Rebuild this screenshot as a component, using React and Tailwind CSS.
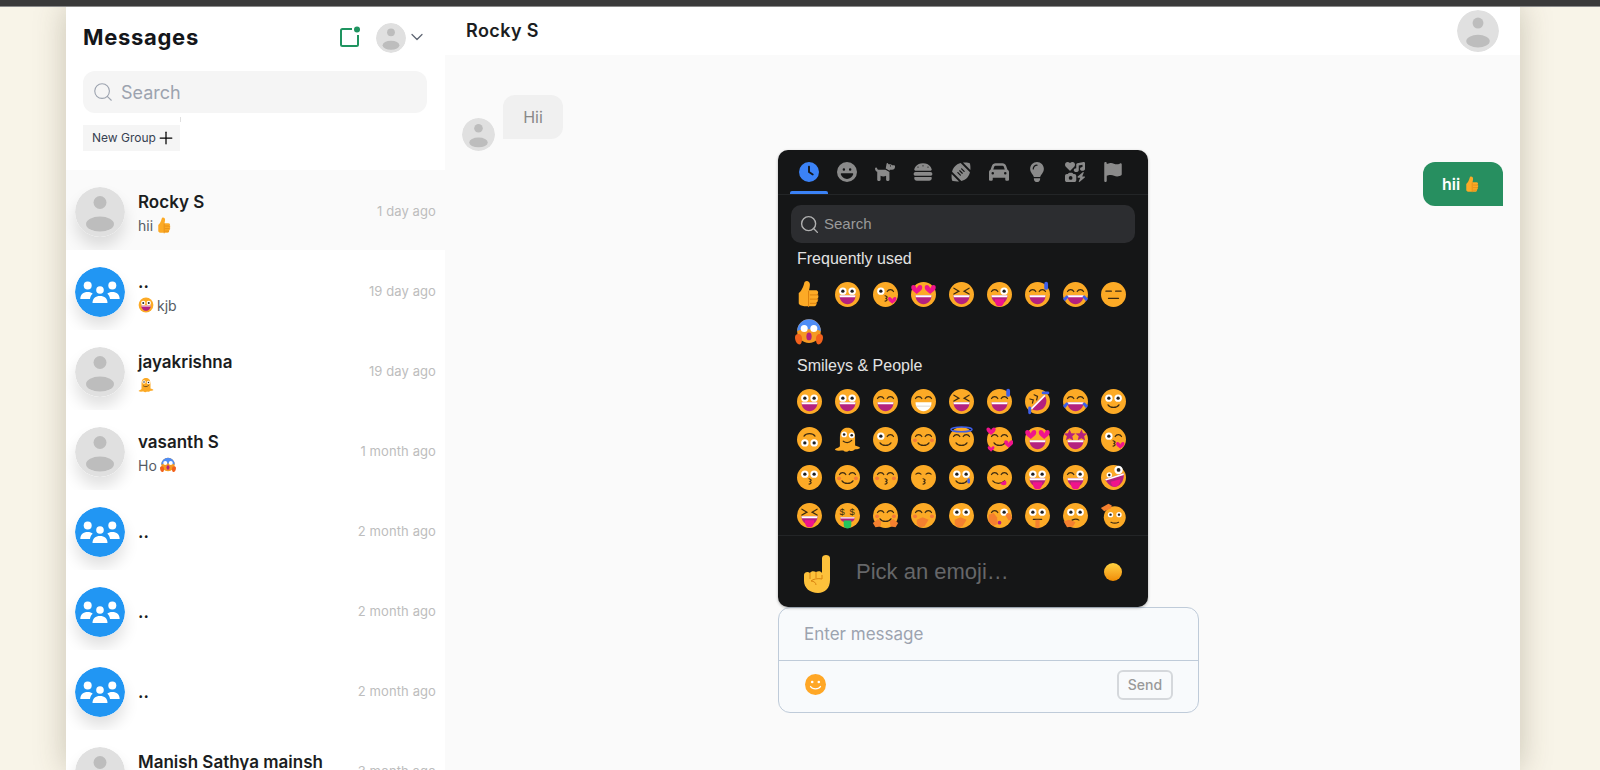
import { ChevronDown, Plus, Search } from "lucide-react";
import {
  FaCar,
  FaClock,
  FaDog,
  FaFaceLaugh,
  FaBurger,
  FaFlag,
  FaFootball,
  FaIcons,
  FaLightbulb,
} from "react-icons/fa6";

const INK = "#3b2a12";
const MOUTH = "#b4217f";
const PINK = "#f0148c";
const BLUE = "#3e5ee8";
const HAND = "#f4802f";

const line = { fill: "none", stroke: INK, strokeWidth: 1.4, strokeLinecap: "round" };

const Heart = ({ x, y, s = 1 }) => (
  <path
    transform={`translate(${x} ${y}) scale(${s})`}
    d="M0 3C-1-1-5-1-5 2c0 2.500 3 4 5 6 2-2 5-3.500 5-6C5-1 1-1 0 3z"
    fill={PINK}
  />
);

const Eye = ({ x, y = 12, r = 4.4 }) => (
  <g>
    <circle cx={x} cy={y} r={r} fill="#fff" />
    <circle cx={x} cy={y} r={r * 0.45} fill="#222" />
  </g>
);

// the pieces every face below is put together from
const parts = {
  big: (<><Eye x={10.5} /><Eye x={21.5} /></>),
  arcs: (<><path {...line} d="M6.500 12.500a4.200 4.200 0 0 1 7.500 0" /><path {...line} d="M18 12.500a4.200 4.200 0 0 1 7.500 0" /></>),
  x: (<><path {...line} d="M7 8.500l6 3.500-6 3.500" /><path {...line} d="M25 8.500l-6 3.500 6 3.500" /></>),
  wink: (<><Eye x={10.5} /><path {...line} d="M18 12.500a4.200 4.200 0 0 1 7.500 0" /></>),
  winkR: (<><path {...line} d="M6.500 12.500a4.200 4.200 0 0 1 7.500 0" /><Eye x={21.5} /></>),
  flat: (<><path {...line} d="M7 12h6.500" /><path {...line} d="M18.500 12h6.500" /></>),
  closed: (<><path {...line} d="M7 12c2-1.500 4-1.500 6 0" /><path {...line} d="M19 12c2-1.500 4-1.500 6 0" /></>),
  hearts: (<><Heart x={8} y={5} s={1.3} /><Heart x={24} y={5} s={1.3} /></>),
  stars: (<><path d="M9 4l2 4.500 5 .5-3.800 3.200 1.200 5L9 14.500 4.600 17l1.200-5L2 9l5-.5z" fill={MOUTH} /><path d="M23 4l2 4.500 5 .5-3.800 3.200 1.200 5L23 14.500 18.600 17l1.200-5L16 9l5-.5z" fill={MOUTH} /></>),
  open: (<><path d="M6.500 17h19c0 6.500-4.500 10.500-9.500 10.500S6.500 23.500 6.500 17z" fill={MOUTH} /><path d="M6.500 17h19l-.4 2.200H6.900z" fill="#fff" /></>),
  teeth: (<><path d="M6.500 17h19c0 6.500-4.500 10.500-9.500 10.500S6.500 23.500 6.500 17z" fill="#fff" /><path {...line} stroke="#c9c4bd" strokeWidth={0.8} d="M7 21.500h18" /></>),
  smile: <path {...line} d="M9.500 20c2.500 4 10.500 4 13 0" />,
  flatMouth: <path {...line} d="M10 20.500h12" />,
  kiss: <path {...line} d="M15.500 17.500c3.200.8 3.200 2.600.5 3.200 2.700.6 2.700 2.400-.5 3.200" />,
  tongue: (<><path d="M6.500 17h19c0 5-3 8-5 9.500-2 3.500-6 3.500-8 0-3-1.500-6-4.500-6-9.500z" fill={MOUTH} /><path d="M6.500 17h19l-.4 2.200H6.900z" fill="#fff" /><path d="M10.500 21.500h11c0 6-2 8.500-5.500 8.500s-5.500-2.500-5.500-8.500z" fill={PINK} /></>),
  yum: (<><path {...line} d="M8 20c3 4 10 4 14 0" /><path d="M17 22.500l6-3c2 2 1.500 5-1 5.500-2 .5-4-.5-5-2.500z" fill={PINK} /></>),
  blush: (<><circle cx="6" cy="17" r="2.300" fill="#f47b3a" /><circle cx="26" cy="17" r="2.300" fill="#f47b3a" /></>),
  sweat: <rect x="24" y="1" width="4.500" height="9.500" rx="2.200" fill={BLUE} />,
  tears: (<><path d="M1 21l4.500-4 2.500 2-4.500 5z" fill={BLUE} /><path d="M31 21l-4.500-4-2.500 2 4.500 5z" fill={BLUE} /></>),
  tear: <rect x="23" y="17" width="3" height="6" rx="1.500" fill={BLUE} />,
  halo: <ellipse cx="16" cy="4" rx="12.500" ry="2.800" fill="none" stroke={BLUE} strokeWidth="1.800" />,
  ringHearts: (<><Heart x={6} y={2} s={1.1} /><Heart x={27} y={17} s={1.1} /><Heart x={6} y={24} s={0.8} /></>),
  kissHeart: <Heart x={24} y={19} s={1} />,
  money: (<><text x="6.500" y="15.500" fontSize="11" fill={INK}>$</text><text x="18.500" y="15.500" fontSize="11" fill={INK}>$</text><path d="M7.500 18h17c0 4-2 6-8.500 6s-8.500-2-8.500-6z" fill={MOUTH} /><path d="M7.500 18h17l-.3 1.600H7.800z" fill="#fff" /><path d="M11.500 22h9v5c0 6-9 6-9 0z" fill="#22c55e" /></>),
  hug: (<><path d="M1 25l6-5 4 3-1 6-6 1z" fill={HAND} /><path d="M31 25l-6-5-4 3 1 6 6 1z" fill={HAND} /></>),
  palm: <path d="M8 21l7-3 7 3-5 8-6 1-3-4z" fill={HAND} />,
  yawn: (<><circle cx="16" cy="24.500" r="2.200" fill={MOUTH} /><path d="M3 15l6-2 4 5 1 8-5 2-6-5z" fill={HAND} /><path d="M29 14l-4-1-2 3 4 6 4-2z" fill={HAND} /></>),
  shush: (<><path {...line} d="M11 20.500h10" /><path d="M13.500 21h5v8c0 3-5 3-5 0z" fill={HAND} /></>),
  think: (<><path {...line} d="M12 21.500c3-1.500 6-1.500 8 0" /><path d="M2 23l6-2 3 1 5 2-3 5-7 1z" fill={HAND} /></>),
  salute: <path d="M1 6l9-4 4 2-1 3-8 3z" fill={HAND} />,
};

const Emoji = ({ kind = [], size = 27 }) => (
  <svg width={size} height={size} viewBox="0 0 32 32" className="shrink-0">
    <circle cx="16" cy="16" r="14.800" fill="#fcaa26" />
    {kind.map((k) => (
      <g key={k}>{parts[k]}</g>
    ))}
  </svg>
);

const Thumb = ({ size = 28 }) => (
  <svg width={size} height={size} viewBox="4 1 26 30" className="shrink-0">
    <path
      d="M6 15c3-2 5-7 6-11 .5-3 6-3 6 2 0 2-.5 4-1 6h7c3 0 3.500 3 2 4.500 1.500 1 1.500 3.500 0 4.500 1 1.500.5 3.500-1 4 .5 2-.5 4-2.500 4H12c-3 0-6-1.500-6-3z"
      fill="#fcaa26"
    />
    <path d="M18 17h9M18 21.500h9M18 26h7M16.500 12.500V30" fill="none" stroke="#d97f0e" strokeWidth="1" />
  </svg>
);

const Melting = ({ size = 27 }) => (
  <svg width={size} height={size} viewBox="0 0 32 32" className="shrink-0">
    <path
      d="M7 14C7 5 11 2 16 2s9 3 9 12v9c2 1 5 1 6 3-2 2-5 1-7 2-2 2-4 2-6 1-2 2-5 2-7 0-3 0-7 1-10-1 1-2 5-2 6-4z"
      fill="#fcaa26"
    />
    <Eye x={12} y={10} r={3.400} />
    <Eye x={21} y={11} r={3.400} />
    <path {...line} d="M11 18c3 2 7 2 10-1" />
  </svg>
);

const Scream = ({ size = 28 }) => (
  <svg width={size} height={size} viewBox="0 0 32 32" className="shrink-0">
    <circle cx="16" cy="15" r="13.500" fill="#f59a23" />
    <path d="M2.500 15a13.500 13.500 0 0 1 27 0c-4-3-23-3-27 0z" fill="#4f8df5" />
    <circle cx="10.500" cy="12" r="4" fill="#fff" />
    <circle cx="21.500" cy="12" r="4" fill="#fff" />
    <ellipse cx="16" cy="21" rx="3" ry="4.500" fill={MOUTH} />
    <path d="M0 22c0-4 5-5 7-2 2 3 1 9-1 10-3 1-6-3-6-8zM32 22c0-4-5-5-7-2-2 3-1 9 1 10 3 1 6-3 6-8z" fill="#f2611c" />
  </svg>
);

const UpsideDown = ({ size = 27 }) => (
  <svg width={size} height={size} viewBox="0 0 32 32" className="shrink-0">
    <circle cx="16" cy="16" r="14.800" fill="#fcaa26" />
    <Eye x={10.5} y={20} />
    <Eye x={21.5} y={20} />
    <path {...line} d="M9.500 12c2.500-4 10.500-4 13 0" />
  </svg>
);

const Rofl = ({ size = 27 }) => (
  <svg width={size} height={size} viewBox="0 0 32 32" className="shrink-0">
    <circle cx="16" cy="16" r="14.800" fill="#fcaa26" />
    <path d="M8 24L24 8c4 5 3 12-1 16-4 3-10 4-15 0z" fill={MOUTH} />
    <path d="M8 24L24 8l1.500 1.500L9.500 25.500z" fill="#fff" />
    <path {...line} d="M12 8l4 2-1 4M7 13l4 1-1 4" />
    <rect x="21" y="4" width="9" height="3.500" rx="1.700" fill={BLUE} />
    <rect x="5" y="22" width="3.500" height="9" rx="1.700" fill={BLUE} />
  </svg>
);

const Zany = ({ size = 27 }) => (
  <svg width={size} height={size} viewBox="0 0 32 32" className="shrink-0">
    <circle cx="16" cy="16" r="14.800" fill="#fcaa26" />
    <Eye x={11} y={13} r={3.200} />
    <Eye x={22} y={7} r={5} />
    <path d="M6 18l22-7c1 8-3 14-9 16-5 1-10-3-13-9z" fill={MOUTH} />
    <path d="M6 18l22-7 .2 2-21 6.500z" fill="#fff" />
    <path d="M13 21l11-3c0 5-2 8-6 9-3 0-5-3-5-6z" fill={PINK} />
  </svg>
);

const Salute = ({ size = 27 }) => (
  <svg width={size} height={size} viewBox="0 0 32 32" className="shrink-0">
    <circle cx="17.500" cy="18" r="13" fill="#fcaa26" />
    <path d="M1 7l9-5 4 2-1 3.500-8 3.500z" fill={HAND} />
    <Eye x={12.5} y={15} r={3.200} />
    <Eye x={22.5} y={15} r={3.200} />
    <path {...line} d="M13 24c3 1.500 6 1.500 9 0" />
  </svg>
);

const F = (...kind) => ({ kind });
const C = (Comp) => ({ Comp });

const frequent = [
  C(Thumb), F("big", "open"), F("wink", "kiss", "kissHeart"), F("hearts", "open"), F("x", "open"),
  F("winkR", "tongue"), F("arcs", "open", "sweat"), F("arcs", "open", "tears"), F("flat", "flatMouth"),
  C(Scream),
];

const smileys = [
  F("big", "open"), F("big", "open"), F("arcs", "open"), F("arcs", "teeth"), F("x", "open"),
  F("arcs", "open", "sweat"), C(Rofl), F("arcs", "open", "tears"), F("big", "smile"),
  C(UpsideDown), C(Melting), F("wink", "smile"), F("arcs", "smile", "blush"), F("arcs", "smile", "halo"),
  F("arcs", "smile", "ringHearts"), F("hearts", "open"), F("stars", "open"), F("wink", "kiss", "kissHeart"),
  F("big", "kiss"), F("arcs", "smile", "blush"), F("arcs", "kiss", "blush"), F("closed", "kiss"), F("big", "smile", "tear"),
  F("arcs", "yum"), F("big", "tongue"), F("winkR", "tongue"), C(Zany),
  F("x", "tongue"), F("money"), F("arcs", "smile", "blush", "hug"), F("arcs", "blush", "palm"), F("big", "palm"),
  F("winkR", "yawn"), F("big", "shush"), F("big", "think"), C(Salute),
];

const EmojiGrid = ({ items }) => (
  <div className="grid grid-cols-[repeat(9,38px)] auto-rows-[38px] place-items-center">
    {items.map((e, i) =>
      e.Comp ? <e.Comp key={i} /> : <Emoji key={i} kind={e.kind} />
    )}
  </div>
);

const Avatar = ({ size = 50, shadow }) => (
  <svg
    width={size}
    height={size}
    viewBox="0 0 50 50"
    className={`shrink-0 rounded-full ${shadow ? "shadow-[0_10px_15px_rgba(0,0,0,0.12)]" : ""}`}
  >
    <circle cx="25" cy="25" r="25" fill="#e0e0e0" />
    <circle cx="25" cy="15.500" r="6.500" fill="#bdbdbd" />
    <ellipse cx="25" cy="37" rx="14" ry="7.500" fill="#bdbdbd" />
  </svg>
);

const GroupAvatar = () => (
  <svg
    width="50"
    height="50"
    viewBox="0 0 50 50"
    className="shrink-0 rounded-full shadow-[0_10px_15px_rgba(0,0,0,0.12)]"
  >
    <circle cx="25" cy="25" r="25" fill="#2196f3" />
    <g fill="#fff">
      <circle cx="12.700" cy="18.500" r="4" />
      <circle cx="37.300" cy="18.500" r="4" />
      <circle cx="25" cy="23" r="3.800" />
      <path d="M5.300 32c0-4.500 3-7 7.400-7 2.200 0 3.800.6 5 1.800-1.600 1.200-2.500 3-2.700 5.200z" />
      <path d="M44.700 32c0-4.500-3-7-7.400-7-2.200 0-3.800.6-5 1.800 1.600 1.200 2.500 3 2.700 5.200z" />
      <path d="M17.500 36c0-4.500 3-7 7.500-7s7.500 2.500 7.500 7z" />
    </g>
  </svg>
);

const chats = [
  { name: "Rocky S", msg: "hii", after: <Thumb size={17} />, time: "1 day ago", active: true },
  { name: "..", before: <Emoji kind={["big", "open"]} size={16} />, msg: "kjb", time: "19 day ago", group: true },
  { name: "jayakrishna", before: <Melting size={16} />, time: "19 day ago" },
  { name: "vasanth S", msg: "Ho", after: <Scream size={16} />, time: "1 month ago" },
  { name: "..", time: "2 month ago", group: true },
  { name: "..", time: "2 month ago", group: true },
  { name: "..", time: "2 month ago", group: true },
  { name: "Manish Sathya mainsh", msg: "\u00a0", time: "3 month ago" },
];

const ChatRow = ({ chat }) => {
  const hasMsg = chat.msg || chat.before;
  return (
    <div
      className={`h-[80px] shrink-0 flex items-center pl-[9px] pr-[9px] pt-[4px] ${
        chat.active ? "bg-[#fafafa]" : "bg-white"
      }`}
    >
      {chat.group ? <GroupAvatar /> : <Avatar shadow />}
      <div className={`ml-[13px] flex-1 min-w-0 ${hasMsg ? "pt-[3px]" : ""}`}>
        <div className="text-[17px] leading-[23px] font-semibold text-[#1b1d21] whitespace-nowrap">
          {chat.name}
        </div>
        {hasMsg && (
          <div className="h-[23px] flex items-center gap-[3px] text-[14px] text-[#555b63] whitespace-nowrap">
            {chat.before}
            {chat.msg}
            {chat.after}
          </div>
        )}
      </div>
      <div className="text-[13px] text-[#bdbdbd] tracking-[0.1px] whitespace-nowrap">{chat.time}</div>
    </div>
  );
};

const tabs = [FaFaceLaugh, FaDog, FaBurger, FaFootball, FaCar, FaLightbulb, FaIcons, FaFlag];

const EmojiPicker = () => (
  <div className="absolute bottom-full left-0 w-[370px] h-[457px] rounded-[10px] bg-[#151617] font-['Liberation_Sans',sans-serif] flex flex-col overflow-hidden shadow-[0_1px_3px_rgba(0,0,0,0.3)]">
    <div className="h-[45px] shrink-0 border-b border-[#232527] pl-[12px] flex">
      <div className="relative w-[38px] h-full flex items-center justify-center">
        <FaClock size={20} className="text-[#3b82f6]" />
        <div className="absolute left-0 right-0 bottom-0 h-[3px] rounded-t-[2px] bg-[#3b82f6]" />
      </div>
      {tabs.map((Icon, i) => (
        <div key={i} className="w-[38px] h-full flex items-center justify-center">
          <Icon size={20} className="text-[#8a8a8a]" />
        </div>
      ))}
    </div>
    <div className="mx-[13px] mt-[10px] h-[38px] shrink-0 rounded-[10px] bg-[#2c2d30] flex items-center pl-[8px] gap-[4px]">
      <Search size={21} strokeWidth={1.6} className="text-[#b0b0b0]" />
      <span className="text-[15px] text-[#9a9a9a]">Search</span>
    </div>
    <div className="pl-[12px] flex-1 min-h-0 overflow-hidden">
      <div className="h-[32px] pl-[7px] flex items-center text-[16px] text-[#e2e2e2]">Frequently used</div>
      <EmojiGrid items={frequent} />
      <div className="h-[31px] pl-[7px] pb-[2px] flex items-center text-[16px] text-[#e2e2e2]">Smileys &amp; People</div>
      <EmojiGrid items={smileys} />
    </div>
    <div className="h-[72px] shrink-0 border-t border-[#232527] flex items-center pl-[25px] pr-[26px]">
      <svg width="30" height="38" viewBox="0 0 30 38" className="shrink-0 mt-[4px]">
        <path
          d="M19 20V3c0-4 8-4 8 0v22c0 8-5 13-12 13C7 38 1 33 1 26v-6c0-3 4-4 6-2 1-2 4-2 6-1 2-1 5-1 6 1z"
          fill="#fdc13b"
        />
        <path d="M7 18v6M13 17v6M19 20v4c-4-1-9 0-11 2 3 0 5 2 5 4" fill="none" stroke="#d9820f" strokeWidth="1" />
      </svg>
      <span className="ml-[23px] flex-1 text-[22px] text-[#666769]">Pick an emoji…</span>
      <div className="w-[18px] h-[18px] rounded-full bg-linear-to-b from-[#ffd23f] to-[#f08c00]" />
    </div>
  </div>
);

const Composer = () => (
  <div className="relative w-[421px] ml-[333px] mt-[401px]">
    <EmojiPicker />
    <div className="h-[106px] rounded-[12px] border border-[#bfcbd9] bg-[#f8fafc] flex flex-col">
      <div className="h-[53px] shrink-0 border-b border-[#bfcbd9] pl-[25px] pt-[2px] flex items-center text-[17px] text-[#9ca3af]">
        Enter message
      </div>
      <div className="flex-1 flex items-center justify-between pl-[26px] pr-[25px] pb-[4px]">
        <svg width="21" height="21" viewBox="0 0 21 21">
          <circle cx="10.500" cy="10.500" r="10.500" fill="#ffa726" />
          <circle cx="7.200" cy="8" r="1.300" fill="#fff" />
          <circle cx="13.800" cy="8" r="1.300" fill="#fff" />
          <path d="M5.500 12.500c2 3.200 8 3.200 10 0" fill="none" stroke="#fff" strokeWidth="1.300" strokeLinecap="round" />
        </svg>
        <button className="w-[56px] h-[30px] rounded-[6px] border-2 border-[#d5d8dc] text-[14px] font-medium text-[#999] flex items-center justify-center">
          Send
        </button>
      </div>
    </div>
  </div>
);

const App = () => {
  return (
    <div className="h-screen overflow-hidden flex flex-col bg-[#f8f4e8] font-[Inter,sans-serif]">
      <div className="h-[6px] shrink-0 bg-[#3a3a3a] relative z-10 shadow-[0_1px_0_#8a8a8a]" />
      <div className="flex-1 min-h-0 ml-[66px] mr-[80px] flex bg-white shadow-[0_0_30px_rgba(80,70,40,0.28)]">
        <aside className="w-[379px] shrink-0 flex flex-col overflow-hidden">
          <div className="h-[164px] shrink-0 pl-[17px] pr-[18px]">
            <div className="h-[60px] flex items-center pt-[2px]">
              <h1 className="text-[22px] font-bold text-[#14161a] tracking-[0.7px] flex-1">Messages</h1>
              <svg width="22" height="22" viewBox="0 0 22 22" className="mr-[15px]">
                <path
                  d="M13 3H3.500A1.500 1.500 0 0 0 2 4.500v14A1.500 1.500 0 0 0 3.500 20h14a1.500 1.500 0 0 0 1.500-1.500V9"
                  fill="none"
                  stroke="#1f9460"
                  strokeWidth="2"
                />
                <circle cx="18" cy="3.500" r="3" fill="#1f9460" />
              </svg>
              <div className="mt-[2px]">
                <Avatar size={30} />
              </div>
              <ChevronDown size={20} strokeWidth={1.5} className="ml-[1px] text-[#5f6673]" />
            </div>
            <div className="mt-[5px] h-[42px] rounded-[12px] bg-[#f5f5f5] flex items-center pl-[9px] gap-[7px]">
              <Search size={22} strokeWidth={1.2} className="text-[#9ca3af]" />
              <span className="text-[18px] text-[#9ca3af]">Search</span>
            </div>
            <div className="relative mt-[12px] w-[97px] h-[26px] bg-[#f5f5f5] flex items-center pl-[9px] text-[12px] text-[#374151] whitespace-nowrap">
              New Group
              <Plus size={20} strokeWidth={1.5} className="text-black" />
              <div className="absolute right-[-1px] top-[-8px] w-[1px] h-[5px] bg-[#e0e0e0]" />
            </div>
          </div>
          {chats.map((chat, i) => (
            <ChatRow key={i} chat={chat} />
          ))}
        </aside>
        <main className="flex-1 min-w-0 flex flex-col">
          <header className="h-[49px] shrink-0 bg-white flex items-center justify-between pl-[21px] pr-[21px]">
            <h2 className="text-[18px] font-semibold text-[#1b1d21] tracking-[0.4px] pb-[1px]">Rocky S</h2>
            <Avatar size={42} />
          </header>
          <section className="flex-1 min-h-0 bg-[#fafafa] pt-[40px]">
            <div className="flex gap-[8px] pl-[17px] h-[56px]">
              <div className="mt-[23px]">
                <Avatar size={33} />
              </div>
              <div className="w-[60px] h-[44px] rounded-[12px] rounded-bl-none bg-[#f0f0f0] flex items-center justify-center text-[16px] text-[#888]">
                Hii
              </div>
            </div>
            <div className="flex justify-end pr-[17px] mt-[11px]">
              <div className="w-[80px] h-[44px] rounded-[12px] rounded-br-none bg-[#278f60] flex items-center gap-[4px] pl-[19px] text-[16px] font-semibold text-white">
                hii
                <Thumb size={17} />
              </div>
            </div>
            <Composer />
          </section>
        </main>
      </div>
    </div>
  );
};

export default App;
